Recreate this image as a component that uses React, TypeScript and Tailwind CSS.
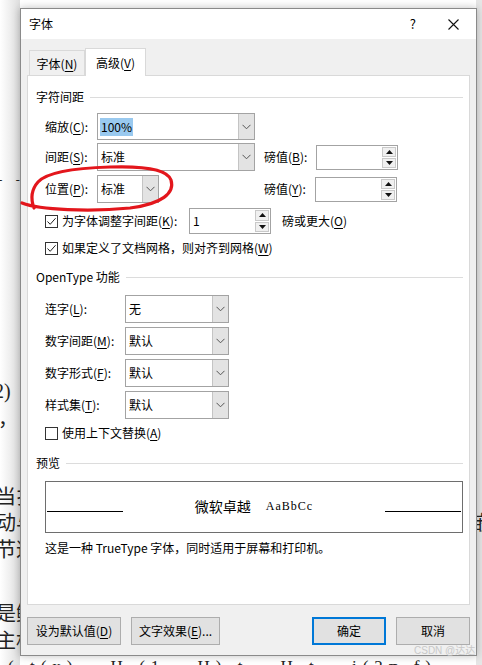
import React from "react";

const ui = { fontFamily: '"Noto Sans CJK SC", "Noto Sans", sans-serif' };

const Chevron = () => (
  <svg width="9" height="6" viewBox="0 0 9 6" fill="none">
    <path d="M0.5 0.8 L4.5 4.8 L8.5 0.8" stroke="#555" strokeWidth="1" />
  </svg>
);

const Combo = ({ value, w, h = 27, sel = false }: { value: string; w: number; h?: number; sel?: boolean }) => (
  <div className="flex border border-[#a3a3a3] bg-white" style={{ width: w, height: h }}>
    <div className="flex-1 flex items-center pl-[2px]">
      <span className={sel ? "bg-[#99c9ef] px-[1px] leading-[18px]" : "pl-[1px]"}>{value}</span>
    </div>
    <div className="w-[16px] bg-[#e3e3e3] border-l border-[#c4c4c4] flex items-center justify-center">
      <Chevron />
    </div>
  </div>
);

const Tri = ({ up }: { up?: boolean }) => (
  <svg width="7" height="4" viewBox="0 0 7 4">
    <path d={up ? "M0 4 L3.5 0 L7 4 Z" : "M0 0 L3.5 4 L7 0 Z"} fill="#111" />
  </svg>
);

const Spin = ({ value = "", w = 82, h = 25 }: { value?: string; w?: number; h?: number }) => (
  <div className="flex border border-[#a3a3a3] bg-white" style={{ width: w, height: h }}>
    <div className="flex-1 flex items-center pl-[3px]">{value}</div>
    <div className="w-[15px] flex flex-col gap-[1px] p-[1px] pl-0">
      <div className="flex-1 bg-[#f0f0f0] border border-[#c9c9c9] flex items-center justify-center">
        <Tri up />
      </div>
      <div className="flex-1 bg-[#f0f0f0] border border-[#c9c9c9] flex items-center justify-center">
        <Tri />
      </div>
    </div>
  </div>
);

const Check = ({ on }: { on?: boolean }) => (
  <div className="w-[13px] h-[13px] border border-[#333] bg-white flex items-center justify-center shrink-0">
    {on && (
      <svg width="11" height="11" viewBox="0 0 11 11" fill="none">
        <path d="M1.5 5.5 L4.2 8.3 L9.6 2.2" stroke="#222" strokeWidth="1" />
      </svg>
    )}
  </div>
);

const Section = ({ title }: { title: string }) => (
  <div className="flex items-center h-[16px] pr-[6px]">
    <span className="whitespace-nowrap">{title}</span>
    <div className="flex-1 h-px bg-[#dcdcdc] ml-[6px]" />
  </div>
);

const Label = ({ pre, k, w }: { pre: string; k: string; w: number }) => (
  <span className="shrink-0 whitespace-nowrap" style={{ width: w }}>
    {pre}(<u className="underline-offset-2">{k}</u>):
  </span>
);

const Btn = ({ children, w, def }: { children: React.ReactNode; w: number; def?: boolean }) => (
  <div
    className={
      "h-[28px] flex items-center justify-center bg-[#e1e1e1] " +
      (def ? "border-2 border-[#0078d7]" : "border border-[#adadad]")
    }
    style={{ width: w }}
  >
    {children}
  </div>
);

export default function App() {
  return (
    <div className="relative w-[482px] h-[665px] overflow-hidden bg-white text-[12px] text-black" style={ui}>
      {/* document behind the dialog */}
      <div className="absolute inset-0 text-[20px] text-[#222] leading-none">
        <div className="absolute left-0 top-0 w-[20px] h-full bg-gradient-to-r from-white to-[#dedede]" />
        <div className="absolute right-0 top-0 w-[6px] h-full bg-[#e6e6e6]" />
        <span className="absolute left-[-2px] top-[172px] text-[13px] tracking-[5px]">- -</span>
        <span className="absolute left-[-6px] top-[381px]" style={{ fontFamily: '"Liberation Serif", serif' }}>2)</span>
        <span className="absolute left-[-2px] top-[408px]">，</span>
        <span className="absolute left-[-4px] top-[486px]">当扌</span>
        <span className="absolute left-[-4px] top-[512px]">动与</span>
        <span className="absolute left-[-4px] top-[539px]">节这</span>
        <span className="absolute left-[-4px] top-[603px]">是鳍</span>
        <span className="absolute left-[-4px] top-[630px]">主机</span>
        <span className="absolute left-[472px] top-[512px]">嵌</span>
        <span className="absolute left-[8px] top-[658px] text-[17px] tracking-[6px]" style={{ fontFamily: '"Liberation Serif", serif' }}>
          (,t(x) - H (1 - H) t - H t - i(2π f)
        </span>
      </div>

      {/* dialog */}
      <div className="relative z-10 ml-[20px] mt-[8px] w-[457px] border border-[#8a8a8a] bg-[#f0f0f0] shadow-[0_0_8px_rgba(0,0,0,0.25)]">
        <div className="h-[30px] bg-white flex items-center pl-[8px]">
          <span className="flex-1">字体</span>
          <span className="text-[13px] mr-[32px]">?</span>
          <svg width="11" height="11" viewBox="0 0 11 11" className="mr-[17px]">
            <path d="M0.5 0.5 L10.5 10.5 M10.5 0.5 L0.5 10.5" stroke="#111" strokeWidth="1.1" />
          </svg>
        </div>

        <div className="px-[6px] pt-[9px]">
          {/* tabs */}
          <div className="flex items-end ml-[2px] h-[27px]">
            <div className="w-[56px] h-[25px] border border-b-0 border-[#d9d9d9] flex items-center justify-center pt-[2px]">
              字体(<u className="underline-offset-2">N</u>)
            </div>
            <div className="w-[61px] h-[28px] -mb-px relative z-10 bg-white border border-b-0 border-[#d9d9d9] flex items-center justify-center">
              高级(<u className="underline-offset-2">V</u>)
            </div>
          </div>

          {/* panel */}
          <div className="h-[530px] bg-white border border-[#d9d9d9] pl-[8px] pt-[13px]">
            <Section title="字符间距" />
            <div className="pl-[9px]">
              <div className="flex items-center mt-[8px]">
                <Label pre="缩放" k="C" w={52} />
                <Combo value="100%" w={158} sel />
              </div>
              <div className="flex items-center mt-[3px]">
                <Label pre="间距" k="S" w={52} />
                <Combo value="标准" w={158} h={28} />
                <span className="ml-[9px] w-[52px]">
                  磅值(<u className="underline-offset-2">B</u>):
                </span>
                <Spin />
              </div>
              <div className="flex items-center mt-[4px]">
                <Label pre="位置" k="P" w={52} />
                <Combo value="标准" w={62} h={28} />
                <span className="ml-[105px] w-[51px]">
                  磅值(<u className="underline-offset-2">Y</u>):
                </span>
                <Spin />
              </div>
              <div className="flex items-center mt-[5px] h-[26px]">
                <Check on />
                <span className="ml-[4px] w-[127px]">
                  为字体调整字间距(<u className="underline-offset-2">K</u>):
                </span>
                <Spin value="1" h={26} />
                <span className="ml-[11px]">
                  磅或更大(<u className="underline-offset-2">O</u>)
                </span>
              </div>
              <div className="flex items-center mt-[6px] h-[16px]">
                <Check on />
                <span className="ml-[4px]">
                  如果定义了文档网格，则对齐到网格(<u className="underline-offset-2">W</u>)
                </span>
              </div>
            </div>

            <div className="mt-[13px]">
              <Section title="OpenType 功能" />
            </div>
            <div className="pl-[9px] mt-[10px] flex flex-col gap-[4px]">
              <div className="flex items-center">
                <Label pre="连字" k="L" w={80} />
                <Combo value="无" w={104} h={28} />
              </div>
              <div className="flex items-center">
                <Label pre="数字间距" k="M" w={80} />
                <Combo value="默认" w={104} h={28} />
              </div>
              <div className="flex items-center">
                <Label pre="数字形式" k="F" w={80} />
                <Combo value="默认" w={104} h={28} />
              </div>
              <div className="flex items-center">
                <Label pre="样式集" k="T" w={80} />
                <Combo value="默认" w={104} h={28} />
              </div>
              <div className="flex items-center mt-[2px] h-[16px]">
                <Check />
                <span className="ml-[4px]">
                  使用上下文替换(<u className="underline-offset-2">A</u>)
                </span>
              </div>
            </div>

            <div className="mt-[14px]">
              <Section title="预览" />
            </div>
            <div className="ml-[9px] mt-[10px] w-[418px] h-[52px] border border-[#6e6e6e] flex items-center">
              <div className="w-[76px] h-px bg-black mt-[8px] ml-px" />
              <div className="flex-1 flex items-center justify-center gap-[15px] pb-[2px]">
                <span className="text-[14px]">微软卓越</span>
                <span className="text-[12px] tracking-[1px]" style={{ fontFamily: '"Liberation Serif", serif' }}>AaBbCc</span>
              </div>
              <div className="w-[76px] h-px bg-black mt-[8px] mr-px" />
            </div>
            <div className="ml-[9px] mt-[6px]">这是一种 TrueType 字体，同时适用于屏幕和打印机。</div>
          </div>

          {/* buttons */}
          <div className="flex items-center mt-[12px] pb-[10px]">
            <Btn w={94}>
              设为默认值(<u className="underline-offset-2">D</u>)
            </Btn>
            <div className="ml-[10px]">
              <Btn w={89}>
                文字效果(<u className="underline-offset-2">E</u>)...
              </Btn>
            </div>
            <div className="ml-auto flex gap-[10px]">
              <Btn w={74} def>
                确定
              </Btn>
              <Btn w={74}>取消</Btn>
            </div>
          </div>
        </div>
      </div>

      {/* red annotation */}
      <svg className="absolute left-0 top-0 z-20 pointer-events-none" width="482" height="665">
        <path
          d="M22 203 C40 210 90 212 130 208 C162 204 175 193 171 180 C167 168 140 166 110 167 C76 168 47 172 38 182 C31 190 31 200 34 208"
          fill="none"
          stroke="#e3161c"
          strokeWidth="3.2"
          strokeLinecap="round"
        />
      </svg>

      <span className="absolute z-20 left-[414px] top-[645px] text-[10px] leading-[12px] text-[#c8c8c8]" style={{ fontFamily: '"Liberation Sans", "Noto Sans CJK SC", sans-serif' }}>
        CSDN @达达
      </span>
    </div>
  );
}
